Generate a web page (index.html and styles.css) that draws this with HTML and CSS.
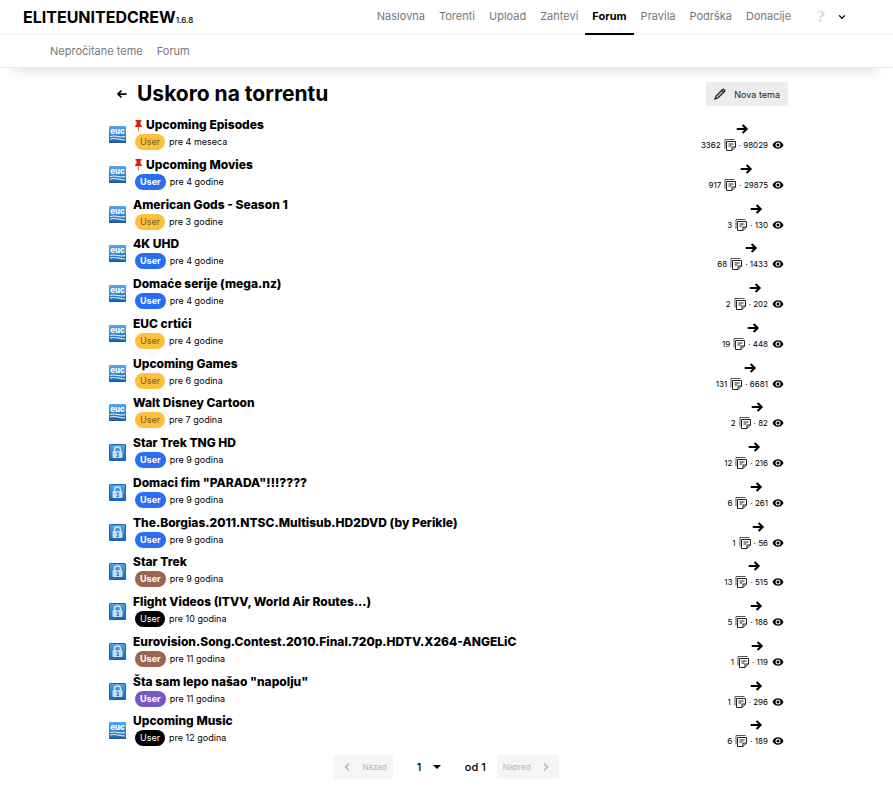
FILE: index.html
```html
<!DOCTYPE html>
<html lang="sr">
<head>
  <meta charset="UTF-8">
  <meta name="viewport" content="width=device-width, initial-scale=1.0">
  <title>Uskoro na torrentu</title>
  <link rel="stylesheet" href="styles.css">
</head>
<body>
  <!-- Icons -->
  <svg class="sprite" aria-hidden="true">
    <symbol id="waves" viewBox="0 0 17 17">
      <path d="M0 16.500H17" stroke="#2b5584"/>
      <text x="8.500" y="7.500" text-anchor="middle" class="euc">euc</text>
      <path d="M1 10.500Q5 9.500 9 10.500T16 10.500M1 13Q5 12 9 13T16 14" fill="none" stroke="#e4f2fc" stroke-width="1.200"/>
    </symbol>
    <symbol id="lock" viewBox="0 0 17 17">
      <rect x=".5" y=".5" width="16" height="16" rx="1" fill="none" stroke="#1f66b0"/>
      <path d="M5.500 8V5.500Q5.500 3 8.500 3T11.500 5.500V8" fill="none" stroke="#cde5f8" stroke-width="1.500"/>
      <rect x="3.500" y="7" width="10" height="7" rx="1" fill="#c5e0f6"/>
      <path d="M7.500 9H9V12M7.500 12.500H10" fill="none" stroke="#2e73b5" stroke-width="1.200"/>
    </symbol>
    <symbol id="pin" viewBox="0 0 11 11">
      <path d="M2.500 0H8.500V1.500H7.500V4.500Q9 5 9 7H2Q2 5 3.500 4.500V1.500H2.500Z" fill="#e8190c"/>
      <path d="M5.500 7V11" stroke="#e0675c"/>
    </symbol>
    <symbol id="arrow" viewBox="0 0 24 24">
      <path d="M3 12H20M13 5L20 12 13 19" fill="none" stroke="#000" stroke-width="3.500"/>
    </symbol>
    <symbol id="notes" viewBox="0 0 12 12">
      <path d="M1 9.500V.5H10.500" fill="none" stroke="#555"/>
      <path d="M2.500 2.500H11.500V8L8 11.500H2.500ZM8 11.500V8H11.500M4.500 5H9.500M4.500 7H7.500" fill="none" stroke="#222"/>
    </symbol>
    <symbol id="eye" viewBox="0 0 24 24">
      <path d="M12 4.500C7 4.500 2.730 7.610 1 12c1.730 4.390 6 7.500 11 7.500s9.270-3.110 11-7.500c-1.730-4.390-6-7.500-11-7.500zM12 17a5 5 0 1 1 0-10 5 5 0 0 1 0 10zm0-8a3 3 0 1 0 0 6 3 3 0 0 0 0-6z"/>
    </symbol>
    <symbol id="pencil" viewBox="0 0 12 12">
      <path d="M1 11L2 8 8.500 1.500Q9.300 .7 10 1.500L10.500 2Q11.300 2.700 10.500 3.500L4 10ZM7.500 2.500L9.500 4.500" fill="#bbb" stroke="#222" stroke-width="1.200"/>
      <path d="M1 11L1.500 9.500 2.500 10.500Z" fill="#222"/>
    </symbol>
    <symbol id="chevron" viewBox="0 0 24 24">
      <path d="M8 5L15 12 8 19" fill="none" stroke="currentColor" stroke-width="3"/>
    </symbol>
    <symbol id="caret" viewBox="0 0 8 4">
      <path d="M0 0H8L4 4Z"/>
    </symbol>
  </svg>

  <header>
    <div class="topbar">
      <a class="logo" href="#">ELITEUNITEDCREW<small>1.6.8</small></a>
      <nav class="main-nav">
        <a href="#">Naslovna</a>
        <a href="#">Torenti</a>
        <a href="#">Upload</a>
        <a href="#">Zahtevi</a>
        <a href="#" class="active">Forum</a>
        <a href="#">Pravila</a>
        <a href="#">Podrška</a>
        <a href="#">Donacije</a>
      </nav>
      <button class="user-menu" aria-label="Meni">
        <span class="avatar">?</span>
        <svg class="down" aria-hidden="true"><use href="#chevron"/></svg>
      </button>
    </div>
    <nav class="sub-nav">
      <a href="#">Nepročitane teme</a>
      <a href="#">Forum</a>
    </nav>
  </header>

  <main>
    <div class="page-head">
      <a class="back" href="#" aria-label="Nazad"><svg><use href="#arrow"/></svg></a>
      <h1>Uskoro na torrentu</h1>
      <button class="new-topic"><svg aria-hidden="true"><use href="#pencil"/></svg>Nova tema</button>
    </div>

    <ul class="topics">
      <li>
        <svg class="status"><use href="#waves"/></svg>
        <div class="topic">
          <h2><svg class="pin"><use href="#pin"/></svg><a href="#">Upcoming Episodes</a></h2>
          <p><a href="#" class="user gold">User</a>pre 4 meseca</p>
        </div>
        <div class="stats">
          <a href="#" aria-label="Poslednja poruka"><svg class="last"><use href="#arrow"/></svg></a>
          <p>3362 <svg class="notes"><use href="#notes"/></svg> · 98029 <svg class="eye"><use href="#eye"/></svg></p>
        </div>
      </li>
      <li>
        <svg class="status"><use href="#waves"/></svg>
        <div class="topic">
          <h2><svg class="pin"><use href="#pin"/></svg><a href="#">Upcoming Movies</a></h2>
          <p><a href="#" class="user blue">User</a>pre 4 godine</p>
        </div>
        <div class="stats">
          <a href="#" aria-label="Poslednja poruka"><svg class="last"><use href="#arrow"/></svg></a>
          <p>917 <svg class="notes"><use href="#notes"/></svg> · 29875 <svg class="eye"><use href="#eye"/></svg></p>
        </div>
      </li>
      <li>
        <svg class="status"><use href="#waves"/></svg>
        <div class="topic">
          <h2><a href="#">American Gods - Season 1</a></h2>
          <p><a href="#" class="user gold">User</a>pre 3 godine</p>
        </div>
        <div class="stats">
          <a href="#" aria-label="Poslednja poruka"><svg class="last"><use href="#arrow"/></svg></a>
          <p>3 <svg class="notes"><use href="#notes"/></svg> · 130 <svg class="eye"><use href="#eye"/></svg></p>
        </div>
      </li>
      <li>
        <svg class="status"><use href="#waves"/></svg>
        <div class="topic">
          <h2><a href="#">4K UHD</a></h2>
          <p><a href="#" class="user blue">User</a>pre 4 godine</p>
        </div>
        <div class="stats">
          <a href="#" aria-label="Poslednja poruka"><svg class="last"><use href="#arrow"/></svg></a>
          <p>68 <svg class="notes"><use href="#notes"/></svg> · 1433 <svg class="eye"><use href="#eye"/></svg></p>
        </div>
      </li>
      <li>
        <svg class="status"><use href="#waves"/></svg>
        <div class="topic">
          <h2><a href="#">Domaće serije (mega.nz)</a></h2>
          <p><a href="#" class="user blue">User</a>pre 4 godine</p>
        </div>
        <div class="stats">
          <a href="#" aria-label="Poslednja poruka"><svg class="last"><use href="#arrow"/></svg></a>
          <p>2 <svg class="notes"><use href="#notes"/></svg> · 202 <svg class="eye"><use href="#eye"/></svg></p>
        </div>
      </li>
      <li>
        <svg class="status"><use href="#waves"/></svg>
        <div class="topic">
          <h2><a href="#">EUC crtići</a></h2>
          <p><a href="#" class="user gold">User</a>pre 4 godine</p>
        </div>
        <div class="stats">
          <a href="#" aria-label="Poslednja poruka"><svg class="last"><use href="#arrow"/></svg></a>
          <p>19 <svg class="notes"><use href="#notes"/></svg> · 448 <svg class="eye"><use href="#eye"/></svg></p>
        </div>
      </li>
      <li>
        <svg class="status"><use href="#waves"/></svg>
        <div class="topic">
          <h2><a href="#">Upcoming Games</a></h2>
          <p><a href="#" class="user gold">User</a>pre 6 godina</p>
        </div>
        <div class="stats">
          <a href="#" aria-label="Poslednja poruka"><svg class="last"><use href="#arrow"/></svg></a>
          <p>131 <svg class="notes"><use href="#notes"/></svg> · 6681 <svg class="eye"><use href="#eye"/></svg></p>
        </div>
      </li>
      <li>
        <svg class="status"><use href="#waves"/></svg>
        <div class="topic">
          <h2><a href="#">Walt Disney Cartoon</a></h2>
          <p><a href="#" class="user gold">User</a>pre 7 godina</p>
        </div>
        <div class="stats">
          <a href="#" aria-label="Poslednja poruka"><svg class="last"><use href="#arrow"/></svg></a>
          <p>2 <svg class="notes"><use href="#notes"/></svg> · 82 <svg class="eye"><use href="#eye"/></svg></p>
        </div>
      </li>
      <li>
        <svg class="status"><use href="#lock"/></svg>
        <div class="topic">
          <h2><a href="#">Star Trek TNG HD</a></h2>
          <p><a href="#" class="user blue">User</a>pre 9 godina</p>
        </div>
        <div class="stats">
          <a href="#" aria-label="Poslednja poruka"><svg class="last"><use href="#arrow"/></svg></a>
          <p>12 <svg class="notes"><use href="#notes"/></svg> · 216 <svg class="eye"><use href="#eye"/></svg></p>
        </div>
      </li>
      <li>
        <svg class="status"><use href="#lock"/></svg>
        <div class="topic">
          <h2><a href="#">Domaci fim "PARADA"!!!????</a></h2>
          <p><a href="#" class="user blue">User</a>pre 9 godina</p>
        </div>
        <div class="stats">
          <a href="#" aria-label="Poslednja poruka"><svg class="last"><use href="#arrow"/></svg></a>
          <p>6 <svg class="notes"><use href="#notes"/></svg> · 261 <svg class="eye"><use href="#eye"/></svg></p>
        </div>
      </li>
      <li>
        <svg class="status"><use href="#lock"/></svg>
        <div class="topic">
          <h2><a href="#">The.Borgias.2011.NTSC.Multisub.HD2DVD (by Perikle)</a></h2>
          <p><a href="#" class="user blue">User</a>pre 9 godina</p>
        </div>
        <div class="stats">
          <a href="#" aria-label="Poslednja poruka"><svg class="last"><use href="#arrow"/></svg></a>
          <p>1 <svg class="notes"><use href="#notes"/></svg> · 56 <svg class="eye"><use href="#eye"/></svg></p>
        </div>
      </li>
      <li>
        <svg class="status"><use href="#lock"/></svg>
        <div class="topic">
          <h2><a href="#">Star Trek</a></h2>
          <p><a href="#" class="user brown">User</a>pre 9 godina</p>
        </div>
        <div class="stats">
          <a href="#" aria-label="Poslednja poruka"><svg class="last"><use href="#arrow"/></svg></a>
          <p>13 <svg class="notes"><use href="#notes"/></svg> · 515 <svg class="eye"><use href="#eye"/></svg></p>
        </div>
      </li>
      <li>
        <svg class="status"><use href="#lock"/></svg>
        <div class="topic">
          <h2><a href="#">Flight Videos (ITVV, World Air Routes...)</a></h2>
          <p><a href="#" class="user black">User</a>pre 10 godina</p>
        </div>
        <div class="stats">
          <a href="#" aria-label="Poslednja poruka"><svg class="last"><use href="#arrow"/></svg></a>
          <p>5 <svg class="notes"><use href="#notes"/></svg> · 186 <svg class="eye"><use href="#eye"/></svg></p>
        </div>
      </li>
      <li>
        <svg class="status"><use href="#lock"/></svg>
        <div class="topic">
          <h2><a href="#">Eurovision.Song.Contest.2010.Final.720p.HDTV.X264-ANGELiC</a></h2>
          <p><a href="#" class="user brown">User</a>pre 11 godina</p>
        </div>
        <div class="stats">
          <a href="#" aria-label="Poslednja poruka"><svg class="last"><use href="#arrow"/></svg></a>
          <p>1 <svg class="notes"><use href="#notes"/></svg> · 119 <svg class="eye"><use href="#eye"/></svg></p>
        </div>
      </li>
      <li>
        <svg class="status"><use href="#lock"/></svg>
        <div class="topic">
          <h2><a href="#">Šta sam lepo našao "napolju"</a></h2>
          <p><a href="#" class="user purple">User</a>pre 11 godina</p>
        </div>
        <div class="stats">
          <a href="#" aria-label="Poslednja poruka"><svg class="last"><use href="#arrow"/></svg></a>
          <p>1 <svg class="notes"><use href="#notes"/></svg> · 296 <svg class="eye"><use href="#eye"/></svg></p>
        </div>
      </li>
      <li>
        <svg class="status"><use href="#waves"/></svg>
        <div class="topic">
          <h2><a href="#">Upcoming Music</a></h2>
          <p><a href="#" class="user black">User</a>pre 12 godina</p>
        </div>
        <div class="stats">
          <a href="#" aria-label="Poslednja poruka"><svg class="last"><use href="#arrow"/></svg></a>
          <p>6 <svg class="notes"><use href="#notes"/></svg> · 189 <svg class="eye"><use href="#eye"/></svg></p>
        </div>
      </li>
    </ul>

    <div class="pager">
      <button disabled><svg class="flip" aria-hidden="true"><use href="#chevron"/></svg>Nazad</button>
      <div class="page-select">
        <select aria-label="Strana">
          <option>1</option>
        </select>
        <svg aria-hidden="true"><use href="#caret"/></svg>
      </div>
      <span>od 1</span>
      <button disabled>Napred<svg aria-hidden="true"><use href="#chevron"/></svg></button>
    </div>
  </main>
</body>
</html>
```
FILE: styles.css
```css
* {
  box-sizing: border-box;
}
body {
  font-family: Inter, 'Liberation Sans', sans-serif;
  margin: 0;
  background: #fff;
  color: #000;
}
a {
  color: inherit;
  text-decoration: none;
}
h1, h2, p {
  margin: 0;
}
button, select {
  font-family: inherit;
  border: none;
  border-radius: 0;
}
.sprite {
  display: none;
}

/* Header */
header {
  border-bottom: 1px solid #e8e8e8;
  box-shadow: 0 16px 16px -16px rgba(0,0,0,0.2);
}
.topbar {
  display: flex;
  align-items: stretch;
  height: 35px;
  padding: 0 46px 0 23px;
  border-bottom: 1px solid #f0f0f0;
}
.logo {
  font-size: 16px;
  font-weight: 700;
  line-height: 34px;
}
.logo small {
  font-size: 8px;
  font-weight: 500;
}
.main-nav {
  display: flex;
  margin-left: auto;
}
.main-nav a {
  padding: 0 7px;
  font-size: 11px;
  line-height: 33px;
  color: #777;
}
.main-nav .active {
  color: #000;
  font-weight: 700;
  border-bottom: 2px solid #000;
  margin-bottom: -1px;
}
.user-menu {
  display: flex;
  align-items: center;
  gap: 12px;
  margin-left: 18px;
  padding: 0;
  background: none;
}
.avatar {
  font-family: 'DejaVu Serif', serif;
  font-size: 15px;
  font-weight: 700;
  color: #e0dbc0;
}
.down {
  width: 10px;
  height: 10px;
  transform: rotate(90deg);
}
.sub-nav {
  display: flex;
  gap: 14px;
  padding: 0 50px;
  font-size: 11px;
  line-height: 32px;
  color: #777;
}

/* Topics */
main {
  max-width: 683px;
  margin: 0 auto;
}
.page-head {
  display: flex;
  align-items: center;
  padding: 10px 0 6px 11px;
}
.back svg {
  display: block;
  width: 12px;
  height: 12px;
  transform: scaleX(-1);
}
h1 {
  margin-left: 9px;
  font-size: 21px;
  line-height: 32px;
  font-weight: 700;
}
.new-topic {
  display: flex;
  align-items: center;
  gap: 8px;
  height: 24px;
  margin-left: auto;
  padding: 0 8px;
  background: #ededed;
  font-size: 9px;
  color: #222;
}
.new-topic svg {
  width: 12px;
  height: 12px;
}
.topics {
  display: grid;
  min-height: 636px;
  margin: 0;
  padding: 0;
  list-style: none;
}
.topics li {
  display: flex;
  align-items: flex-start;
  padding: 0 4px;
}
.status {
  width: 17px;
  height: 17px;
  margin: 10px 7px 0 0;
  border-radius: 1px;
  background: linear-gradient(#55a6ea, #1264b8);
}
.euc {
  font-size: 8px;
  font-weight: 800;
  fill: #fff;
}
.topic {
  flex: 1;
}
.topic h2 {
  display: flex;
  align-items: center;
  font-size: 12px;
  line-height: 18px;
  font-weight: 800;
}
.pin {
  width: 11px;
  height: 11px;
  margin-right: 2px;
}
.topic p {
  display: flex;
  align-items: center;
  gap: 4px;
  padding-left: 2px;
  font-size: 9px;
  line-height: 16px;
}
.user {
  padding: 0 5px;
  border-radius: 8px;
  color: #fff;
  font-weight: 700;
}
.gold {
  background: #ffc03d;
  color: #765a20;
  font-weight: 400;
}
.blue {
  background: #286df5;
}
.brown {
  background: #9c654d;
}
.purple {
  background: #7857c2;
}
.black {
  background: #000;
  font-weight: 400;
}
.stats {
  padding-top: 5px;
  font-size: 8px;
  line-height: 16px;
}
.stats p {
  display: flex;
  align-items: center;
  gap: 3px;
}
.last {
  display: block;
  width: 14px;
  height: 16px;
  margin: 0 auto;
}
.notes {
  width: 12px;
  height: 12px;
}
.eye {
  width: 12px;
  height: 12px;
  margin-left: 1px;
}

/* Pager */
.pager {
  display: flex;
  justify-content: center;
  align-items: center;
  margin-top: 3px;
  font-size: 11px;
  font-weight: 500;
}
.pager button {
  display: flex;
  align-items: center;
  gap: 8px;
  height: 24px;
  padding: 0 6px;
  background: #f5f5f5;
  color: #b5b5b5;
  font-size: 8px;
}
.pager button svg {
  width: 14px;
  height: 12px;
}
.pager .flip {
  transform: scaleX(-1);
}
.page-select {
  display: grid;
  align-items: center;
  margin: 0 24px;
}
.page-select select,
.page-select svg {
  grid-area: 1 / 1;
}
.page-select select {
  appearance: none;
  width: 24px;
  padding: 0;
  background: none;
  font-size: 11px;
  font-weight: 500;
}
.page-select svg {
  justify-self: end;
  width: 8px;
  height: 4px;
  pointer-events: none;
}
.pager span {
  margin-right: 11px;
}
```
